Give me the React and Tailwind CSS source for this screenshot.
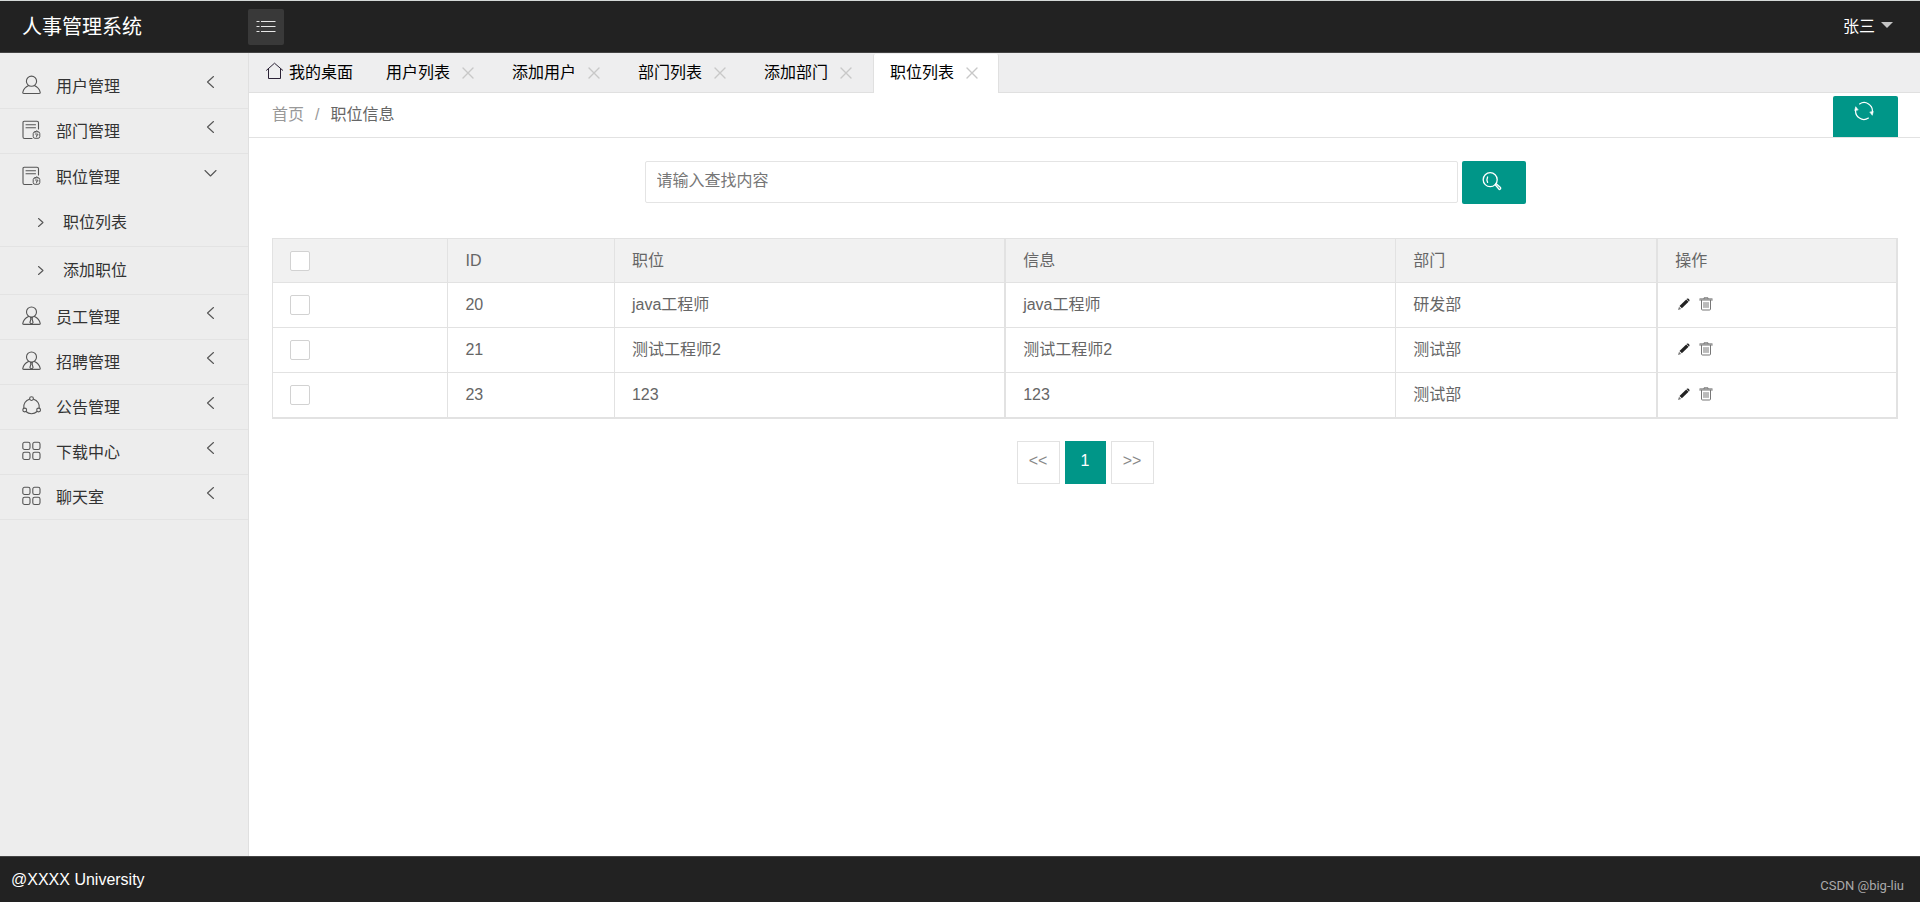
import React, { useState } from "react";

const iconProps = {
  viewBox: "0 0 20 20",
  fill: "none",
  stroke: "currentColor",
  strokeWidth: 1.1,
  strokeLinecap: "round",
  strokeLinejoin: "round",
  "aria-hidden": true,
};

function UserIcon() {
  return (
    <svg {...iconProps} className="size-5 shrink-0">
      <circle cx="9.500" cy="6.200" r="5.100" />
      <path d="M6.700 10.600C3.500 12 1.500 14.200.8 17.300Q.6 18.500 1.800 18.500H17.200Q18.400 18.500 18.200 17.300C17.500 14.200 15.500 12 12.300 10.600" />
    </svg>
  );
}

function StaffIcon() {
  return (
    <svg {...iconProps} className="size-5 shrink-0">
      <circle cx="9.500" cy="6" r="5" />
      <path d="M6.500 10.400C3.500 11.800 1.400 14 .8 17.300Q.6 18.400 1.800 18.400H17.200Q18.400 18.400 18.200 17.300C17.600 14 15.500 11.800 12.500 10.400" />
      <path d="M8.500 11.500h2l-.4 1.500 1 3.500-1.600 1.800-1.600-1.800 1-3.500z" />
    </svg>
  );
}

function DocIcon() {
  return (
    <svg {...iconProps} className="size-5 shrink-0">
      <path d="M10 18.500H2.500Q1 18.500 1 17V2.500Q1 1.300 2.200 1.300H15Q16.500 1.300 16.500 2.800V9" />
      <path d="M4 4.700h9.500M4 7.700h9.500" />
      <rect x="11.200" y="11.800" width="6.600" height="6.500" rx="1.800" strokeWidth="1" />
      <path d="M13.200 11.600q1.500-2 3 0M13.300 14h2.500v1.200h-1.200v1.600" strokeWidth="0.900" />
    </svg>
  );
}

function ShareIcon() {
  return (
    <svg {...iconProps} className="size-5 shrink-0">
      <circle cx="9.500" cy="2.600" r="1.900" />
      <circle cx="2.700" cy="14" r="1.900" />
      <circle cx="16.600" cy="14" r="1.900" />
      <path d="M7.400 3.200A8 8 0 0 0 1.800 12M11.600 3.200A8 8 0 0 1 17.200 12M3.900 15.500A8 8 0 0 0 15.100 15.500" />
    </svg>
  );
}

function GridIcon() {
  return (
    <svg {...iconProps} className="size-5 shrink-0">
      <rect x="0.800" y="1.300" width="7.200" height="7.200" rx="1.800" />
      <rect x="10.800" y="1.300" width="7.200" height="7.200" rx="1.800" />
      <rect x="0.800" y="11.300" width="7.200" height="7.200" rx="1.800" />
      <rect x="10.800" y="11.300" width="7.200" height="7.200" rx="1.800" />
    </svg>
  );
}

function ChevronIcon({ dir }) {
  const d = {
    left: "M9.500 1.500L3.500 7l6 5.500",
    down: "M1 4.500L6.500 10 12 4.500",
    right: "M4.500 2.500l4.500 4-4.500 4",
  }[dir];
  return (
    <svg {...iconProps} viewBox="0 0 14 14" className="size-3.5 shrink-0 text-[#555]">
      <path d={d} />
    </svg>
  );
}

function HomeIcon() {
  return (
    <svg {...iconProps} viewBox="0 0 18 18" strokeWidth="1" className="mb-1 size-[18px] shrink-0 text-[#2b2236]">
      <path d="M.5 8.300L8.500 1.200l8.200 7.100M2.500 7v9.500h12V7" />
    </svg>
  );
}

function CloseIcon() {
  return (
    <svg {...iconProps} viewBox="0 0 12 12" strokeWidth="1.400" className="size-3">
      <path d="M1 1l10 10M11 1L1 11" />
    </svg>
  );
}

function RefreshIcon() {
  return (
    <svg {...iconProps} strokeWidth="1.200" className="size-5">
      <path d="M5.600 2.900A8.300 8.300 0 0 1 18.300 11M14.400 17.100A8.300 8.300 0 0 1 1.700 9" />
      <path d="M16 11.300l2.300 3 .9-3.600zM4 8.700L1.700 5.700.8 9.300z" fill="currentColor" strokeWidth="0.600" />
    </svg>
  );
}

function SearchIcon() {
  return (
    <svg {...iconProps} strokeWidth="1.300" className="size-5">
      <circle cx="8.200" cy="8.700" r="7" />
      <path d="M5.600 6q-1.300 2.700 0 5.400" />
      <path d="M13.200 13.800l1-1 4.300 3.700q.7 1.700-1.200 2z" />
    </svg>
  );
}

function PencilIcon() {
  return (
    <svg viewBox="0 0 14 14" className="size-3.5" fill="currentColor" aria-hidden="true">
      <path d="M9.200 2.400l2.400 2.300-6.700 6.600L2.500 9z" />
      <path d="M9.800 1.800q.9-.8 1.800 0l.6.600q.8.900 0 1.800l-.2.200-2.400-2.400z" />
      <path d="M2 9.700l2.200 2.200-3.200 1.200z" fill="#777" />
    </svg>
  );
}

function TrashIcon() {
  return (
    <svg {...iconProps} viewBox="0 0 14 14" strokeWidth="1" className="size-3.5">
      <path d="M.7 3h12.600M.9 1.900h12.200M5 1.700V.800h4v.9M2.500 3.300v8.700q0 1 1 1h7q1 0 1-1V3.300" />
      <path d="M5 5.500v5M7 5.500v5M9 5.500v5" />
    </svg>
  );
}

const menu = [
  { label: "用户管理", Icon: UserIcon },
  { label: "部门管理", Icon: DocIcon },
  { label: "职位管理", Icon: DocIcon, children: ["职位列表", "添加职位"] },
  { label: "员工管理", Icon: StaffIcon },
  { label: "招聘管理", Icon: StaffIcon },
  { label: "公告管理", Icon: ShareIcon },
  { label: "下载中心", Icon: GridIcon },
  { label: "聊天室", Icon: GridIcon },
];

const tabs = ["用户列表", "添加用户", "部门列表", "添加部门", "职位列表"];

const rows = [
  { id: 20, name: "java工程师", info: "java工程师", dept: "研发部" },
  { id: 21, name: "测试工程师2", info: "测试工程师2", dept: "测试部" },
  { id: 23, name: "123", info: "123", dept: "测试部" },
];

const cell = "border border-[#e2e2e2] px-[17px] text-left font-normal";
const wideCell = "border border-r-2 border-[#e2e2e2] px-[17px] text-left font-normal";

function Check({ label }) {
  return (
    <input
      type="checkbox"
      aria-label={label}
      className="block size-5 appearance-none rounded-xs border border-[#d2d2d2] bg-white checked:bg-[#009688]"
    />
  );
}

function Sidebar() {
  const [open, setOpen] = useState("职位管理");
  return (
    <nav className="w-[249px] shrink-0 border-r border-[#e0e0e0] bg-[#ededed] pt-[11px] text-[#333]">
      <ul>
        {menu.map(({ label, Icon, children }) => {
          const isOpen = open === label && children;
          return (
            <li key={label}>
              <button
                type="button"
                aria-expanded={Boolean(isOpen)}
                onClick={() => setOpen(isOpen ? "" : label)}
                className={
                  isOpen
                    ? "flex h-[45px] w-full items-center pr-[30px] pb-0.5 pl-[22px] text-left"
                    : "flex h-[45px] w-full items-center border-b border-[#e3e3e3] pr-[30px] pb-0.5 pl-[22px] text-left"
                }
              >
                <span className="text-[#555]">
                  <Icon />
                </span>
                <span className="ml-3.5 flex-1 pt-1">{label}</span>
                <span className="pb-1.5">
                  <ChevronIcon dir={isOpen ? "down" : "left"} />
                </span>
              </button>
              {isOpen && (
                <ul>
                  {children.map((c) => (
                    <li key={c}>
                      <a href="#" className="flex h-12 items-center gap-[15px] border-b border-[#e3e3e3] pl-[34px]">
                        <ChevronIcon dir="right" />
                        {c}
                      </a>
                    </li>
                  ))}
                </ul>
              )}
            </li>
          );
        })}
      </ul>
    </nav>
  );
}

export default function App() {
  return (
    <div className="flex min-h-screen flex-col bg-white font-['Liberation_Sans','Noto_Sans_CJK_SC',sans-serif] text-base/6 text-[#666]">
      <header className="flex h-[53px] items-center border-t border-b border-t-[#d5d9d8] border-b-[#444] bg-[#222] pr-[27px] text-white">
        <h1 className="w-[248px] pl-[22px] text-xl">人事管理系统</h1>
        <button
          type="button"
          aria-label="切换菜单"
          className="flex size-9 items-center justify-center rounded-xs bg-[#393939] text-[#e6e6e6]"
        >
          <svg viewBox="0 0 20 14" className="h-3.5 w-5" stroke="currentColor" strokeWidth="1.200" aria-hidden="true">
            <path d="M.5 1.500h3M5 1.500h14.500M.5 6.500h3M5 6.500h14.500M.5 11.500h3M5 11.500h14.500" />
          </svg>
        </button>
        <button type="button" className="ml-auto flex items-center gap-1.5">
          张三
          <svg viewBox="0 0 12 6" className="mb-1 h-1.5 w-3 text-[#c4c4c4]" fill="currentColor" aria-hidden="true">
            <path d="M0 0h12L6 6z" />
          </svg>
        </button>
      </header>

      <div className="flex flex-1">
        <Sidebar />
        <main className="min-w-0 flex-1">
          <div className="flex h-10 border-b border-[#e0e0e0] bg-[#eeeeef] text-black">
            <a href="#" className="flex w-[120px] items-center gap-[5px] pl-[17px]">
              <HomeIcon />
              我的桌面
            </a>
            {tabs.map((t) => (
              <div
                key={t}
                className={
                  t === "职位列表"
                    ? "mt-px -mb-px flex w-[126px] items-center justify-between rounded-t-xs border-x border-[#e0e0e0] bg-white pr-5 pb-px pl-4"
                    : "mt-px flex w-[126px] items-center justify-between pr-[21px] pl-[17px]"
                }
              >
                <a href="#">{t}</a>
                <button type="button" aria-label={"关闭" + t} className="text-[#c8c8c8]">
                  <CloseIcon />
                </button>
              </div>
            ))}
          </div>

          <div className="flex h-[45px] justify-between border-b border-[#e2e2e2] pr-[22px] pl-[23px]">
            <nav aria-label="面包屑" className="flex items-center">
              <a href="#" className="text-[#999]">首页</a>
              <span className="mx-[11px] text-[#999]">/</span>
              <span>职位信息</span>
            </nav>
            <button
              type="button"
              aria-label="刷新"
              className="mt-[3px] flex w-[65px] justify-center self-stretch rounded-t-xs bg-[#009688] pt-[5px] pr-[3px] text-white"
            >
              <RefreshIcon />
            </button>
          </div>

          <div className="pt-[23px] pr-[22px] pl-[23px]">
            <form className="flex justify-center gap-1" onSubmit={(e) => e.preventDefault()}>
              <input
                type="text"
                aria-label="查找内容"
                placeholder="请输入查找内容"
                className="h-[42px] w-1/2 rounded-xs border border-[#e4e4e4] px-[11px] pb-0.5 outline-none placeholder:text-[#777]"
              />
              <button
                type="submit"
                aria-label="查找"
                className="flex h-[43px] w-16 items-center justify-center rounded-xs bg-[#009688] pr-[3px] pb-[3px] text-white"
              >
                <SearchIcon />
              </button>
            </form>

            <table className="mt-[34px] w-full table-fixed border-collapse border-r-2 border-b-2 border-[#e2e2e2]">
              <colgroup>
                <col className="w-[10.8%]" />
                <col className="w-[10.25%]" />
                <col className="w-[24.05%]" />
                <col className="w-[24.05%]" />
                <col className="w-[16.1%]" />
                <col className="w-[14.75%]" />
              </colgroup>
              <thead>
                <tr className="h-11 bg-[#f1f1f1]">
                  <th className={cell}><Check label="全选" /></th>
                  <th className={cell}>ID</th>
                  <th className={wideCell}>职位</th>
                  <th className={cell}>信息</th>
                  <th className={wideCell}>部门</th>
                  <th className={wideCell}>操作</th>
                </tr>
              </thead>
              <tbody>
                {rows.map((r) => (
                  <tr key={r.id} className="h-[45px]">
                    <td className={cell}><Check label={"选择 " + r.id} /></td>
                    <td className={cell}>{r.id}</td>
                    <td className={wideCell}>{r.name}</td>
                    <td className={cell}>{r.info}</td>
                    <td className={wideCell}>{r.dept}</td>
                    <td className={wideCell}>
                      <div className="flex items-center gap-2 pb-0.5 pl-0.5">
                        <button type="button" aria-label="编辑" className="text-[#222]"><PencilIcon /></button>
                        <button type="button" aria-label="删除" className="text-[#777]"><TrashIcon /></button>
                      </div>
                    </td>
                  </tr>
                ))}
              </tbody>
            </table>

            <nav aria-label="分页" className="mt-[22px] flex justify-center gap-[5px]">
              <a href="#" className="flex h-[43px] w-[43px] items-center justify-center border border-[#e2e2e2] pb-0.5 text-[#888]">&lt;&lt;</a>
              <span aria-current="page" className="flex h-[43px] w-[41px] items-center justify-center bg-[#009688] pb-0.5 text-white">1</span>
              <a href="#" className="flex h-[43px] w-[43px] items-center justify-center border border-[#e2e2e2] pb-0.5 text-[#888]">&gt;&gt;</a>
            </nav>
          </div>
        </main>
      </div>

      <footer className="flex h-[46px] items-center justify-between border-t border-[#444] bg-[#222] pr-4 pl-[11px] text-white">
        <span>@XXXX University</span>
        <span className="pt-3 font-['Roboto',sans-serif] text-[13px]/4 text-[#aaa]">CSDN @big-liu</span>
      </footer>
    </div>
  );
}
